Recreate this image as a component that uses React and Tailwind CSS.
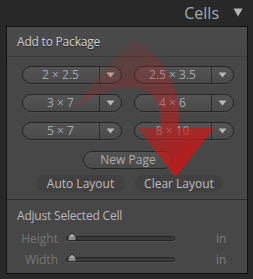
import React from "react";

const Pill = ({ label }) => (
  <div className="flex h-[18px] w-[100px] rounded-full border border-[#262626] bg-gradient-to-b from-[#545454] to-[#4a4a4a] shadow-[0_1px_0_rgba(255,255,255,0.06)]">
    <div className="flex w-[77px] items-center justify-center border-r border-[#2c2c2c] text-[12px] leading-none text-[#a3a9b0]">
      {label}
    </div>
    <div className="flex flex-1 items-center justify-center">
      <svg width="9" height="6" viewBox="0 0 9 6">
        <path d="M0.5 0.5 L8.5 0.5 L4.5 5.5 Z" fill="#b8b8b8" />
      </svg>
    </div>
  </div>
);

const SliderRow = ({ label }) => (
  <div className="flex h-[21px] items-center">
    <div className="w-[51px] text-right text-[12px] leading-none text-[#767676]">{label}</div>
    <div className="relative ml-[8px] h-[5px] w-[109px] rounded-full border border-[#232323] bg-[#3a3a3a] shadow-[0_1px_0_rgba(255,255,255,0.08)]">
      <svg className="absolute left-[0px] top-[-5px]" width="10" height="10" viewBox="0 0 10 10">
        <path d="M5 1 L9 4.5 L9 8.5 L1 8.5 L1 4.5 Z" fill="#8a8a8a" stroke="#2a2a2a" strokeWidth="1" />
        <path d="M5 2 L8 4.6 L2 4.6 Z" fill="#b0b0b0" />
      </svg>
    </div>
    <div className="ml-[41px] text-[12px] leading-none text-[#7e7e7e]">in</div>
  </div>
);

export default function App() {
  return (
    <div
      className="relative h-[279px] w-[253px] overflow-hidden bg-[#282828]"
      style={{ fontFamily: '"Open Sans", "Noto Sans", sans-serif' }}
    >
      <div className="flex h-[26px] items-center justify-end pr-[10px]">
        <span className="text-[16px] leading-none text-[#a4abb2]">Cells</span>
        <svg className="ml-[14px] mt-[-2px]" width="10" height="9" viewBox="0 0 10 9">
          <path d="M0.5 0.5 L9.5 0.5 L5 8.5 Z" fill="#b4b4b4" />
        </svg>
      </div>
      <div className="ml-[6px] h-[248px] w-[242px] border border-[#101010] bg-[#474747]">
        <div className="flex h-[30px] items-center border-b border-[#3b3b3b] bg-gradient-to-b from-[#4b4b4b] to-[#474747] pl-[10px] text-[12px] tracking-[-0.2px] text-[#cfcfcf] [text-shadow:0_1px_0_#2a2a2a]">
          Add to Package
        </div>
        <div className="flex flex-col items-center border-b border-[#2c2c2c] pb-[7px] pt-[9px]">
          <div className="grid grid-cols-2 gap-x-[12px] gap-y-[10px] pl-[1px]">
            <Pill label="2 × 2.5" />
            <Pill label="2.5 × 3.5" />
            <Pill label="3 × 7" />
            <Pill label="4 × 6" />
            <Pill label="5 × 7" />
            <Pill label="8 × 10" />
          </div>
          <div className="mt-[11px] ml-[2px] flex h-[18px] w-[90px] items-center justify-center rounded-full border border-[#262626] bg-gradient-to-b from-[#535353] to-[#4a4a4a] text-[12px] leading-none text-[#acacac]">
            New Page
          </div>
          <div className="mt-[6px] flex gap-[10px] pl-[5px]">
            <div className="flex h-[17px] w-[89px] items-center justify-center rounded-full bg-[#414141] text-[12px] leading-none text-[#bdbdbd]">
              Auto Layout
            </div>
            <div className="flex h-[17px] w-[88px] items-center justify-center rounded-full bg-[#414141] text-[12px] leading-none text-[#bdbdbd]">
              Clear Layout
            </div>
          </div>
        </div>
        <div className="pl-[10px] pt-[10px] text-[12px] leading-none tracking-[-0.2px] text-[#b8b8b8]">
          Adjust Selected Cell
        </div>
        <div className="mt-[6px] flex flex-col">
          <SliderRow label="Height" />
          <SliderRow label="Width" />
        </div>
      </div>
      <svg className="pointer-events-none absolute inset-0" width="253" height="279" viewBox="0 0 253 279">
        <defs>
          <linearGradient id="rg" x1="100" y1="50" x2="175" y2="175" gradientUnits="userSpaceOnUse">
            <stop offset="0" stopColor="#d01414" stopOpacity="0.06" />
            <stop offset="0.45" stopColor="#d01414" stopOpacity="0.3" />
            <stop offset="1" stopColor="#d01414" stopOpacity="0.85" />
          </linearGradient>
        </defs>
        <path
          d="M 76 108 C 90 80, 110 62, 132 40 C 160 52, 182 85, 178 128 L 213 128 L 175 177 L 137 128 L 160 128 C 162 105, 152 90, 135 88 C 112 86, 92 94, 76 108 Z"
          fill="url(#rg)"
        />
      </svg>
    </div>
  );
}
